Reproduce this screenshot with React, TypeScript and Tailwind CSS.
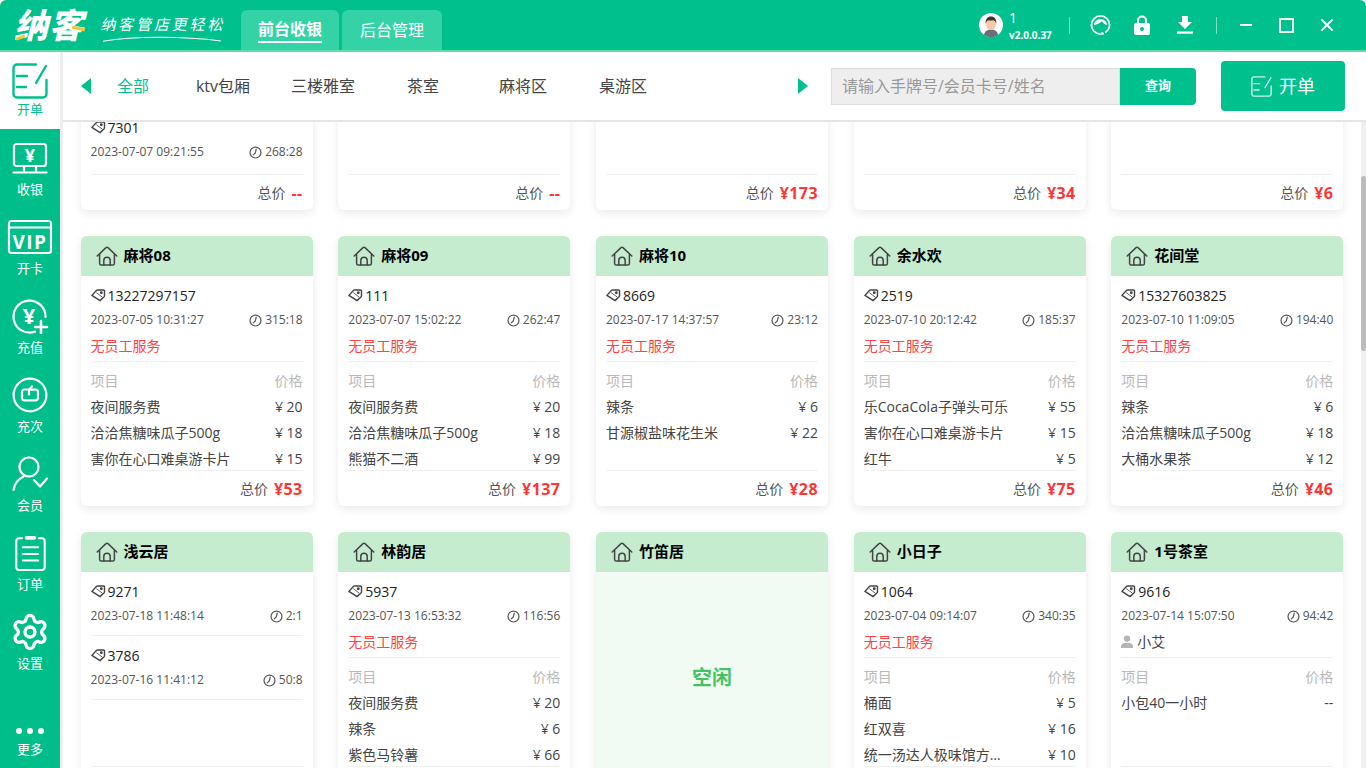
import { Settings } from "lucide-react";

type Order = { tag: string; date: string; time: string; line?: boolean };
type Item = [string, string];
type Room = {
  name?: string;
  orders?: Order[];
  service?: string;
  staff?: string;
  items?: Item[];
  total?: string;
  bodyClass?: string;
  free?: boolean;
};

const rooms: Room[] = [
  { orders: [{ tag: "7301", date: "2023-07-07 09:21:55", time: "268:28", line: false }], total: "--", bodyClass: "pt-[128px]" },
  { total: "--" },
  { total: "¥173" },
  { total: "¥34" },
  { total: "¥6" },
  {
    name: "麻将08",
    orders: [{ tag: "13227297157", date: "2023-07-05 10:31:27", time: "315:18" }],
    service: "无员工服务",
    items: [["夜间服务费", "20"], ["洽洽焦糖味瓜子500g", "18"], ["害你在心口难桌游卡片", "15"]],
    total: "¥53",
  },
  {
    name: "麻将09",
    orders: [{ tag: "111", date: "2023-07-07 15:02:22", time: "262:47" }],
    service: "无员工服务",
    items: [["夜间服务费", "20"], ["洽洽焦糖味瓜子500g", "18"], ["熊猫不二酒", "99"]],
    total: "¥137",
  },
  {
    name: "麻将10",
    orders: [{ tag: "8669", date: "2023-07-17 14:37:57", time: "23:12" }],
    service: "无员工服务",
    items: [["辣条", "6"], ["甘源椒盐味花生米", "22"]],
    total: "¥28",
  },
  {
    name: "余水欢",
    orders: [{ tag: "2519", date: "2023-07-10 20:12:42", time: "185:37" }],
    service: "无员工服务",
    items: [["乐CocaCola子弹头可乐", "55"], ["害你在心口难桌游卡片", "15"], ["红牛", "5"]],
    total: "¥75",
  },
  {
    name: "花间堂",
    orders: [{ tag: "15327603825", date: "2023-07-10 11:09:05", time: "194:40" }],
    service: "无员工服务",
    items: [["辣条", "6"], ["洽洽焦糖味瓜子500g", "18"], ["大桶水果茶", "12"]],
    total: "¥46",
  },
  {
    name: "浅云居",
    orders: [
      { tag: "9271", date: "2023-07-18 11:48:14", time: "2:1" },
      { tag: "3786", date: "2023-07-16 11:41:12", time: "50:8" },
    ],
  },
  {
    name: "林韵居",
    orders: [{ tag: "5937", date: "2023-07-13 16:53:32", time: "116:56" }],
    service: "无员工服务",
    items: [["夜间服务费", "20"], ["辣条", "6"], ["紫色马铃薯", "66"]],
  },
  { name: "竹笛居", free: true },
  {
    name: "小日子",
    orders: [{ tag: "1064", date: "2023-07-04 09:14:07", time: "340:35" }],
    service: "无员工服务",
    items: [["桶面", "5"], ["红双喜", "16"], ["统一汤达人极味馆方…", "10"]],
  },
  {
    name: "1号茶室",
    orders: [{ tag: "9616", date: "2023-07-14 15:07:50", time: "94:42" }],
    staff: "小艾",
    items: [["小包40一小时", "--"]],
  },
];

function HouseIcon() {
  return (
    <svg viewBox="0 0 22 20" className="h-[20px] w-[22px] shrink-0" fill="none" stroke="#444" strokeWidth="1.5" strokeLinejoin="round" strokeLinecap="round">
      <path d="M1.2 10 10 1.6a1.4 1.4 0 0 1 2 0L20.8 10" />
      <path d="M3.6 8.4v9a1.6 1.6 0 0 0 1.6 1.6h11.600a1.6 1.6 0 0 0 1.6-1.6v-9" />
      <path d="M7.8 19v-4.6a3.2 3.2 0 0 1 6.4 0V19" />
    </svg>
  );
}

function TagIcon() {
  return (
    <svg viewBox="0 0 16 14" className="h-[14px] w-[15px] shrink-0" fill="none" stroke="#444" strokeWidth="1.5" strokeLinejoin="round">
      <path d="M1 7.4 6 2a1.4 1.4 0 0 1 1-.4h6.2a1.2 1.2 0 0 1 1.2 1.2v5a1.4 1.4 0 0 1-.4 1L9.6 13 1 7.4Z" />
      <path d="M5.600 4.500 12 9.200" strokeWidth="0.9" />
      <circle cx="11" cy="4.600" r="1.500" fill="#444" stroke="none" />
    </svg>
  );
}

function ClockIcon() {
  return (
    <svg viewBox="0 0 14 14" className="h-[13px] w-[13px] shrink-0" fill="none" stroke="#555" strokeWidth="1.3" strokeLinecap="round">
      <circle cx="7" cy="7" r="5.9" />
      <path d="M7.800 3.400 6.800 7.400 4.600 9.600" />
    </svg>
  );
}

function PersonIcon() {
  return (
    <svg viewBox="0 0 12 13" className="h-[13px] w-[12px] shrink-0" fill="#b5b5b5">
      <circle cx="6" cy="3.600" r="3.200" />
      <path d="M0 13v-1.600C0 9.200 2.400 7.800 6 7.800s6 1.400 6 3.600V13H0Z" />
    </svg>
  );
}

function OrderBlock({ order }: { order: Order }) {
  return (
    <div className={order.line === false ? "pt-2" : "border-b border-[#f1f1f1] pt-2 pb-[7px]"}>
      <div className="flex h-6 items-center gap-[2px] pb-[2px] text-[14px] text-[#222]">
        <TagIcon />
        <span>{order.tag}</span>
      </div>
      <div className="flex h-6 items-center justify-between text-[12px] text-[#555]">
        <span>{order.date}</span>
        <span className="flex items-center gap-[3px]">
          <ClockIcon />
          {order.time}
        </span>
      </div>
    </div>
  );
}

function RoomCard({ room }: { room: Room }) {
  const hasMeta = room.service || room.staff;
  return (
    <div className="flex h-[270px] flex-col overflow-hidden rounded-md bg-white shadow-[0_3px_10px_rgba(0,0,0,0.09)]">
      <div className="flex h-10 shrink-0 items-center gap-[6px] bg-[#c6ecd0] pl-[15px] text-[15px] font-bold text-black">
        <HouseIcon />
        <span className="pb-[2px]">{room.name}</span>
      </div>
      {room.free ? (
        <div className="flex flex-1 items-center justify-center bg-[#f1fbf4] pb-[18px] text-[20px] font-bold text-[#45c263]">空闲</div>
      ) : (
        <>
          <div className={`h-[194px] shrink-0 overflow-hidden px-[10px] ${room.bodyClass ?? ""}`}>
            {room.orders?.map((o) => (
              <div key={o.tag}>
                {hasMeta ? (
                  <div className="border-b border-[#f1f1f1] pb-[3px]">
                    <OrderBlock order={{ ...o, line: false }} />
                    <div className="mt-[2px] flex h-6 items-center gap-1 pb-[2px] text-[14px]">
                      {room.service ? (
                        <span className="text-[#ff4343]">{room.service}</span>
                      ) : (
                        <>
                          <PersonIcon />
                          <span className="text-[#444]">{room.staff}</span>
                        </>
                      )}
                    </div>
                  </div>
                ) : (
                  <OrderBlock order={o} />
                )}
              </div>
            ))}
            {room.items && (
              <div className="mt-[5px] text-[14px] text-[#444]">
                <div className="flex h-[26px] items-center justify-between text-[#b9b9b9]">
                  <span>项目</span>
                  <span>价格</span>
                </div>
                {room.items.map(([name, price]) => (
                  <div key={name} className="flex h-[26px] items-center justify-between">
                    <span>{name}</span>
                    <span>{price === "--" ? "--" : `¥ ${price}`}</span>
                  </div>
                ))}
              </div>
            )}
          </div>
          <div className="mx-[10px] flex h-9 shrink-0 items-center justify-end gap-[6px] border-t border-[#f1f1f1] text-[14px] text-[#555]">
            {room.total && (
              <>
                <span>总价</span>
                <span className="text-[16px] font-bold tracking-[0.4px] text-[#ff3535]">{room.total}</span>
              </>
            )}
          </div>
        </>
      )}
    </div>
  );
}

function OpenIcon({ className }: { className: string }) {
  return (
    <svg viewBox="0 0 36 36" className={className} fill="none" stroke="currentColor" strokeWidth="2.4" strokeLinecap="round" strokeLinejoin="round">
      <path d="M24 1.500H5A3.500 3.500 0 0 0 1.500 5v26A3.500 3.500 0 0 0 5 34.500h26a3.500 3.500 0 0 0 3.500-3.500V17" />
      <path d="M34 3 24 20" />
      <path d="M5 13h10M5 24h9" />
    </svg>
  );
}

function NavIcon({ kind }: { kind: string }) {
  const base = { fill: "none", stroke: "white", strokeWidth: 2.2, strokeLinecap: "round" as const, strokeLinejoin: "round" as const };
  if (kind === "cash")
    return (
      <svg viewBox="0 0 36 32" className="h-[32px] w-[36px]" {...base}>
        <rect x="2" y="2" width="32" height="22" rx="2.500" />
        <path d="M12 24v6M24 24v6M1.500 30.500h33" />
        <text x="18" y="20" textAnchor="middle" fontSize="18" fontWeight="700" fill="white" stroke="none">¥</text>
      </svg>
    );
  if (kind === "vip")
    return (
      <svg viewBox="0 0 46 36" className="h-[36px] w-[46px]" {...base}>
        <rect x="2" y="2" width="42" height="32" rx="2.500" />
        <path d="M2 8.500h42" />
        <text x="23" y="30" textAnchor="middle" fontSize="19" fontWeight="700" letterSpacing="1.500" fill="white" stroke="none">VIP</text>
      </svg>
    );
  if (kind === "charge")
    return (
      <svg viewBox="0 0 38 36" className="h-[36px] w-[38px]" {...base}>
        <path d="M24 33.600A16 16 0 1 1 34.500 19" />
        <text x="18" y="26" textAnchor="middle" fontSize="22" fontWeight="700" fill="white" stroke="none">¥</text>
        <path d="M30 23v12M24 29h12" strokeWidth="2.600" />
      </svg>
    );
  if (kind === "times")
    return (
      <svg viewBox="0 0 36 36" className="h-[36px] w-[36px]" {...base}>
        <circle cx="18" cy="18" r="16.400" />
        <path d="M15 12.500h-2.600A2.400 2.400 0 0 0 10 15v6a2.400 2.400 0 0 0 2.400 2.400h11.200A2.400 2.400 0 0 0 26 21v-6a2.400 2.400 0 0 0-2.400-2.400H17" />
        <path d="M17 12.500l3-3M17 12.500v5" />
      </svg>
    );
  if (kind === "member")
    return (
      <svg viewBox="0 0 36 36" className="h-[36px] w-[36px]" {...base}>
        <circle cx="17" cy="11" r="9.500" />
        <path d="M1.500 34c1-7 5-11 10-13.500" />
        <path d="M22 24l6 6.500 7-8" />
      </svg>
    );
  if (kind === "order")
    return (
      <svg viewBox="0 0 34 38" className="h-[36px] w-[33px]" {...base}>
        <path d="M8 3.500H5A3.200 3.200 0 0 0 2 6.700v27.100A3.200 3.200 0 0 0 5 37h24a3.200 3.200 0 0 0 3-3.200V6.700a3.200 3.200 0 0 0-3-3.200h-3" />
        <path d="M13 3h8" strokeWidth="4" />
        <path d="M9 13h16M9 20h16M9 27h16" />
      </svg>
    );
  if (kind === "settings") return <Settings className="h-[40px] w-[40px] text-white" strokeWidth={2} />;
  return (
    <div className="flex h-[36px] items-end gap-[5px] pb-[6px]">
      <span className="h-[6px] w-[6px] rounded-full bg-white" />
      <span className="h-[6px] w-[6px] rounded-full bg-white" />
      <span className="h-[6px] w-[6px] rounded-full bg-white" />
    </div>
  );
}

const navItems = [
  ["cash", "收银"],
  ["vip", "开卡"],
  ["charge", "充值"],
  ["times", "充次"],
  ["member", "会员"],
  ["order", "订单"],
  ["settings", "设置"],
];

function Sidebar() {
  return (
    <div className="flex w-[63px] shrink-0 flex-col border-r-[3px] border-[#eeeeee] bg-[#00be89] text-[13px] text-white">
      <div className="flex h-[77px] flex-col items-center bg-white pt-[11px] text-[#00c18d]">
        <OpenIcon className="h-[36px] w-[36px]" />
        <span className="leading-[20px]">开单</span>
      </div>
      {navItems.map(([kind, label]) => (
        <div key={kind} className="flex h-[79px] flex-col items-center justify-end pb-[10px]">
          <div className="flex h-[40px] items-center">
            <NavIcon kind={kind} />
          </div>
          <span className="mt-[2px] leading-[18px]">{label}</span>
        </div>
      ))}
      <div className="mt-auto flex flex-col items-center pb-[10px]">
        <NavIcon kind="more" />
        <span className="leading-[18px]">更多</span>
      </div>
    </div>
  );
}

function Logo() {
  return (
    <div className="flex items-center">
      <div className="relative ml-[14px] w-[74px] text-[34px] leading-[40px] font-black tracking-[1px] text-white italic">
        纳客
        <span className="absolute top-[31px] left-[2px] h-[3px] w-[9px] -rotate-[20deg] bg-[#f7c531]" />
        <span className="absolute top-[22px] left-[58px] h-[3px] w-[13px] rotate-[14deg] bg-[#f7c531]" />
      </div>
      <div className="relative ml-[13px] w-[126px] pt-[6px]">
        <div className="-skew-x-12 pb-[8px] text-[15px] leading-[20px] tracking-[2.800px] text-white">纳客管店更轻松</div>
        <svg viewBox="0 0 118 6" className="absolute bottom-0 left-[2px] h-[6px] w-[118px]" fill="none" stroke="white" strokeWidth="1.100">
          <path d="M0 5.200C30 0 80 0 118 5" />
        </svg>
      </div>
    </div>
  );
}

function TopBar() {
  return (
    <div className="flex h-[52px] shrink-0 items-stretch rounded-t-md border-b-2 border-[#5fdca4] bg-[#00c18d] text-white">
      <Logo />
      <div className="ml-[14px] flex items-end gap-[3px]">
        <div className="flex h-[40px] w-[98px] items-center justify-center rounded-t-md bg-[#34d3a6]">
          <span className="border-b-2 border-white text-[16px] leading-[24px] font-bold">前台收银</span>
        </div>
        <div className="flex h-[40px] w-[100px] items-center justify-center rounded-t-md bg-[#34d3a6] text-[16px]">后台管理</div>
      </div>
      <div className="ml-auto flex items-center pr-[33px]">
        <svg viewBox="0 0 24 24" className="h-[24px] w-[24px]">
          <circle cx="12" cy="12" r="12" fill="white" />
          <path d="M5 22c.5-4 3.500-5.500 7-5.500s6.500 1.500 7 5.500a12 12 0 0 1-14 0Z" fill="#6b6f78" />
          <ellipse cx="12" cy="11" rx="5" ry="6" fill="#f5c9a8" />
          <path d="M6.800 11c-.8-5 2-7.500 5.200-7.500s6 2.500 5.200 7.500c-.6-2.500-1.400-3.500-3-3.700-2 .4-4 .3-5.300 0-1 .6-1.700 1.700-2.100 3.700Z" fill="#3a3230" />
        </svg>
        <div className="ml-[6px] flex w-[59px] flex-col">
          <span className="text-[14px] leading-[16px]">1</span>
          <span className="mt-[3px] text-[10px] leading-[12px] font-bold">v2.0.0.37</span>
        </div>
        <span className="ml-[1px] h-[17px] w-px bg-[#7fe0c6]" />
        <svg viewBox="0 0 22 22" className="ml-[20px] h-[22px] w-[21px]" fill="none" stroke="white" strokeWidth="1.800" strokeLinecap="round">
          <path d="M1.500 11a9.500 9.500 0 0 1 19 0c0 3-1.500 5.500-4 7.500" />
          <path d="M1.500 11c0 4.500 3.500 9 9 9.500" />
          <path d="M4 11c.5-4 3.500-6 7-6s6.500 2 7 6c-2.500-.5-4.500-1.800-6-3.800C10 9.500 7.500 10.800 4 11Z" fill="white" stroke="none" />
          <circle cx="13" cy="20" r="1.500" fill="white" stroke="none" />
        </svg>
        <svg viewBox="0 0 16 20" className="ml-[23px] h-[20px] w-[16px]">
          <path d="M4 9V5.500a4 4 0 0 1 8 0V9" fill="none" stroke="white" strokeWidth="2" />
          <rect y="8" width="16" height="12" rx="2" fill="white" />
          <circle cx="8" cy="14" r="2" fill="#00c18d" />
        </svg>
        <svg viewBox="0 0 16 18" className="ml-[27px] h-[18px] w-[16px]" fill="white">
          <path d="M5 0h6v6h4l-7 7-7-7h4V0Z" />
          <rect y="15.500" width="16" height="2.200" />
        </svg>
        <span className="ml-[23px] h-[17px] w-px bg-[#7fe0c6]" />
        <span className="ml-[23px] h-[2px] w-[12px] bg-white" />
        <span className="ml-[27px] h-[15px] w-[15px] border-2 border-[#f5fbe8]" />
        <svg viewBox="0 0 12 12" className="ml-[27px] h-[12px] w-[12px]" stroke="white" strokeWidth="1.800" strokeLinecap="round">
          <path d="M1 1l10 10M11 1 1 11" />
        </svg>
      </div>
    </div>
  );
}

function Toolbar() {
  return (
    <div className="flex h-[70px] shrink-0 items-center border-b-2 border-[#e5e5e5] bg-white">
      <span className="ml-[18px] h-0 w-0 border-y-[8px] border-r-[10px] border-y-transparent border-r-[#00c18d]" />
      <div className="ml-[-8px] flex text-[16px] text-[#444]">
        {["全部", "ktv包厢", "三楼雅室", "茶室", "麻将区", "桌游区"].map((t, i) => (
          <span key={t} className={`w-[100px] text-center ${i === 0 ? "-mr-[10px] text-[#00c18d]" : ""}`}>
            {t}
          </span>
        ))}
      </div>
      <span className="ml-[125px] h-0 w-0 border-y-[8px] border-l-[10px] border-y-transparent border-l-[#00c18d]" />
      <div className="ml-[23px] flex h-[37px]">
        <div className="flex w-[289px] items-center border border-[#dddddd] bg-[#eeeeee] pl-[10px] text-[16px] text-[#999]">请输入手牌号/会员卡号/姓名</div>
        <div className="flex w-[76px] items-center justify-center rounded-r bg-[#00c18d] text-[13px] font-bold text-white">查询</div>
      </div>
      <div className="ml-[25px] flex h-[50px] w-[124px] items-center justify-center gap-[7px] rounded bg-[#00c18d] text-[18px] text-white">
        <OpenIcon className="h-[21px] w-[21px] opacity-80" />
        <span>开单</span>
      </div>
    </div>
  );
}

export default function App() {
  return (
    <div className="flex h-screen flex-col overflow-hidden bg-white font-['Open_Sans','Noto_Sans_CJK_SC',sans-serif]">
      <TopBar />
      <div className="flex min-h-0 flex-1">
        <Sidebar />
        <div className="flex min-w-0 flex-1 flex-col">
          <Toolbar />
          <div className="flex min-h-0 flex-1">
            <div className="min-w-0 flex-1 overflow-hidden pl-[17.6px]">
              <div className="mt-[-182px] grid grid-cols-[repeat(5,232px)] gap-x-[25.7px] gap-y-[26px]">
                {rooms.map((r, i) => (
                  <RoomCard key={i} room={r} />
                ))}
              </div>
            </div>
            <div className="w-[5px] shrink-0 bg-[#f1f1f1] pt-[54px]">
              <div className="h-[175px] rounded-sm bg-[#bbbbbb]" />
            </div>
          </div>
        </div>
      </div>
    </div>
  );
}
